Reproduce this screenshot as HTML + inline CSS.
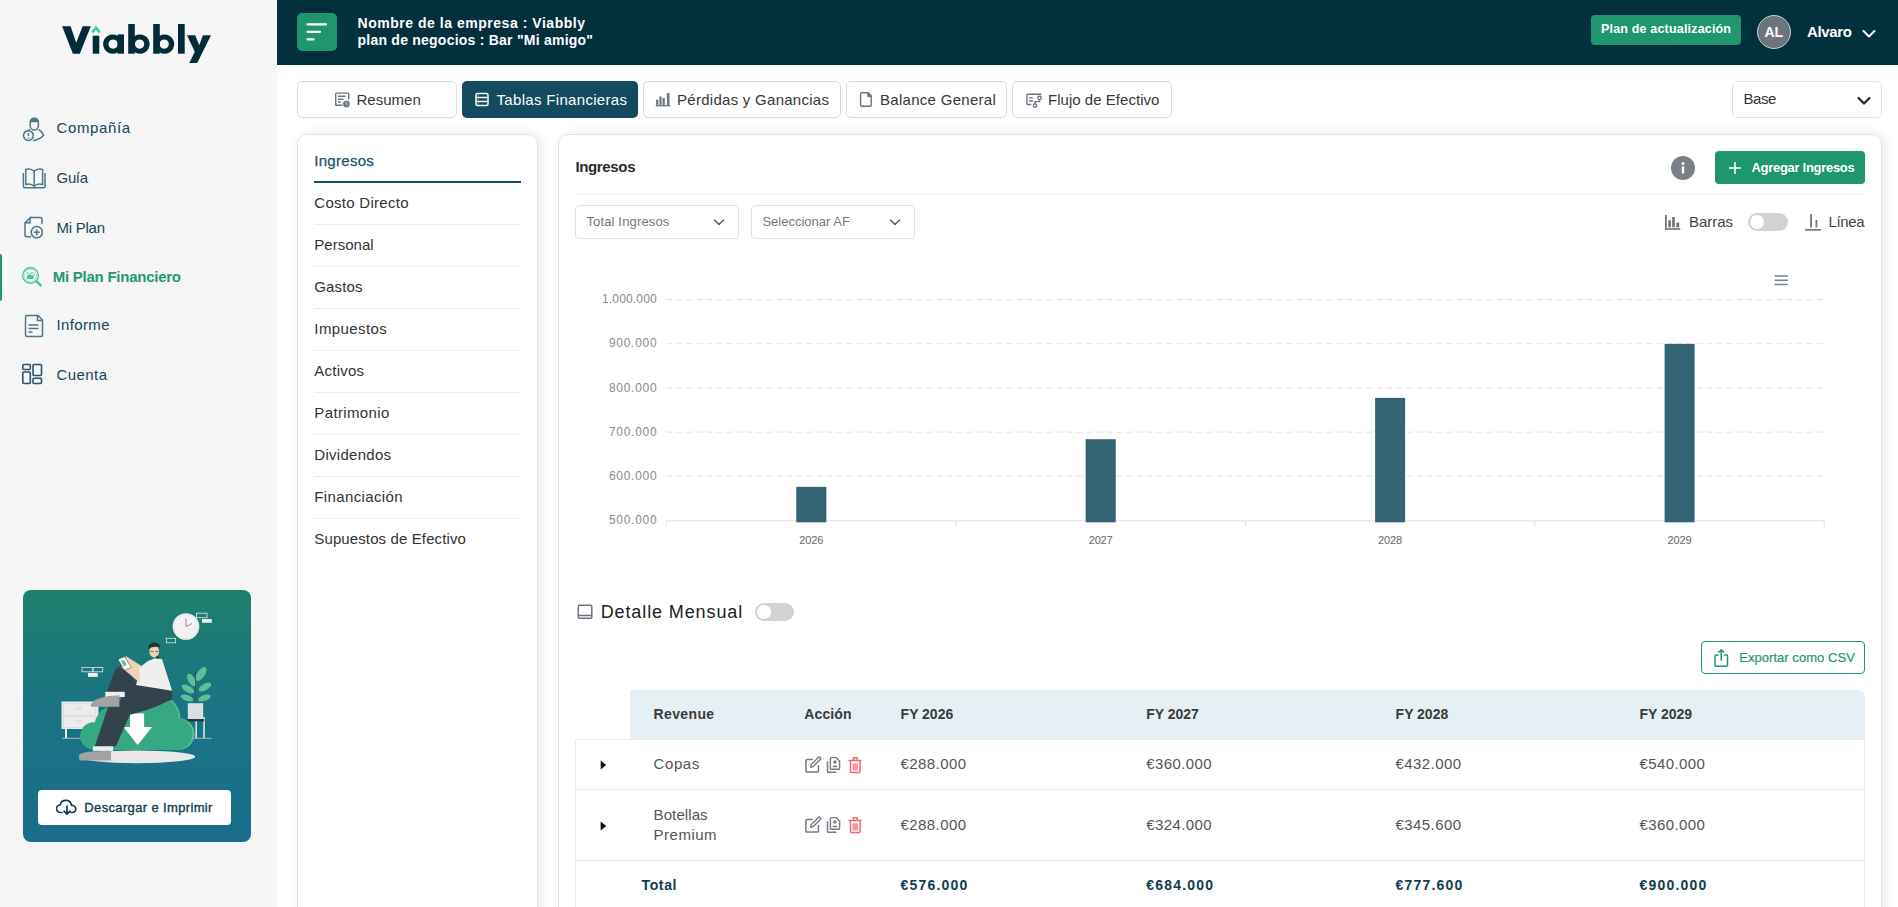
<!DOCTYPE html><html><head><meta charset="utf-8"><style>
html,body{margin:0;padding:0;}
body{width:1898px;height:907px;overflow:hidden;position:relative;background:#fff;font-family:"Liberation Sans",sans-serif;}
.t{position:absolute;white-space:nowrap;}
</style></head><body>
<div style="position:absolute;left:0;top:0;width:277px;height:907px;background:#f6f6f6"></div>
<svg style="position:absolute;left:0;top:0" width="277" height="80" viewBox="0 0 277 80">
<g fill="#032b3a">
<polygon points="62.1,26.2 70.6,26.2 76.2,42.8 82.6,26.2 90.8,26.2 79.8,53.7 72.9,53.7"/>
<rect x="92.7" y="35.7" width="6.6" height="18"/>
<path fill-rule="evenodd" d="M112.75,34.4 a9.65,9.65 0 1,0 0.01,0 Z M113.1,39.5 a4.6,4.6 0 1,0 0.01,0 Z"/>
<rect x="117.6" y="34.4" width="6.4" height="19.3"/>
<rect x="128.2" y="24" width="6.6" height="29.7"/>
<path fill-rule="evenodd" d="M139.95,34.4 a9.65,9.65 0 1,0 0.01,0 Z M139.6,39.5 a4.6,4.6 0 1,0 0.01,0 Z"/>
<rect x="153.2" y="24" width="6.6" height="29.7"/>
<path fill-rule="evenodd" d="M164.55,34.4 a9.65,9.65 0 1,0 0.01,0 Z M164.2,39.5 a4.6,4.6 0 1,0 0.01,0 Z"/>
<rect x="178" y="24" width="6.7" height="29.7"/>
<polygon points="187,35.2 195.2,35.2 199.2,45.2 203,35.2 211,35.2 197.2,62.9 189.3,62.9 194.8,51.8"/>
</g>
<polyline points="92.3,32.6 96,27.8 99.7,32.6" fill="none" stroke="#2fcf96" stroke-width="2.4" stroke-linejoin="miter"/>
</svg>
<svg style="position:absolute;left:0;top:100px" width="60" height="300" viewBox="0 100 60 300" fill="none" stroke="#4d7886" stroke-width="1.5">
<!-- Compania: person with ! -->
<path d="M30.2,122.5 a4.1,4.5 0 1,1 8.2,0 v3 a4.1,4.5 0 0,1 -8.2,0 Z"/>
<path d="M30.4,121.6 c0.6,-3.2 7.3,-3.2 7.8,0 Z" fill="#4d7886"/>
<path d="M30,129.5 c-1.5,0.6 -2.5,1.2 -3.2,1.8 M38.5,129.5 c2.2,1 4,3 5.2,5.8 c-3,3.2 -7.5,5 -10.5,5.3"/>
<circle cx="28.4" cy="135.6" r="4.9"/>
<path d="M28.4,133 v3 M28.4,137.6 v0.8"/>
<!-- Guia: book -->
<path d="M23.4,173 v13.5 a1.2,1.2 0 0,0 1.2,1.2 h19.2 a1.2,1.2 0 0,0 1.2,-1.2 v-13.5 M25.8,169.5 v15 c3,-1 6,-0.5 8.4,1.8 c2.4,-2.3 5.4,-2.8 8.4,-1.8 v-15 c-3,-1 -6,-0.5 -8.4,1.8 c-2.4,-2.3 -5.4,-2.8 -8.4,-1.8 Z M34.2,171.3 v15"/>
<!-- Mi Plan: doc with plus -->
<path d="M30,217.5 h10 a2,2 0 0,1 2,2 v4.5 M31,236.8 h-4 a2,2 0 0,1 -2,-2 v-12 l5,-5 v5 h-5"/>
<circle cx="36.8" cy="232.2" r="5.6"/>
<path d="M36.8,229.2 v6 M33.8,232.2 h6"/>
<!-- Informe: document -->
<path d="M27,315.5 h11 l4.5,4.5 v15 a1.5,1.5 0 0,1 -1.5,1.5 h-14 a1.5,1.5 0 0,1 -1.5,-1.5 v-18 a1.5,1.5 0 0,1 1.5,-1.5 Z M37.5,315.5 v5 h5 M28.5,325 h10 M28.5,328.5 h10 M28.5,332 h4"/>
<!-- Cuenta: grid -->
<g stroke="#2a5668" stroke-width="1.6">
<rect x="22.8" y="364.5" width="7.5" height="5" rx="1"/>
<rect x="22.8" y="372" width="7.5" height="11.5" rx="1"/>
<rect x="33" y="364.5" width="8.5" height="11" rx="1"/>
<rect x="33" y="378.3" width="8.5" height="5.2" rx="1"/>
</g>
</svg>
<svg style="position:absolute;left:18px;top:262px" width="28" height="28" viewBox="18 262 28 28" fill="none" stroke="#4cc59a" stroke-width="1.4">
<circle cx="30.5" cy="275.5" r="7.8"/>
<circle cx="30.5" cy="275.5" r="6" stroke-width="0.8" stroke-dasharray="1.2 1"/>
<path d="M36.2,281 l5.2,5.2" stroke-width="2.6"/>
<rect x="27" y="275" width="6.5" height="4" fill="#4cc59a" stroke="none"/>
<path d="M26.5,272 l3,2.5 l2.5,-2 l3,2.5" stroke-width="1"/>
</svg>
<div style="position:absolute;left:0;top:254.3px;width:2px;height:46.3px;background:#1f9670;border-radius:0 3px 3px 0"></div>
<div class="t" style="left:56.60px;top:120.10px;font-size:15px;line-height:15px;font-weight:400;color:#17465a;letter-spacing:0.599px;">Compañía</div>
<div class="t" style="left:56.60px;top:170.00px;font-size:15px;line-height:15px;font-weight:400;color:#17465a;letter-spacing:-0.373px;">Guía</div>
<div class="t" style="left:56.60px;top:219.80px;font-size:15px;line-height:15px;font-weight:400;color:#17465a;letter-spacing:-0.270px;">Mi Plan</div>
<div class="t" style="left:52.70px;top:268.80px;font-size:15px;line-height:15px;font-weight:700;color:#1f9a72;letter-spacing:-0.248px;">Mi Plan Financiero</div>
<div class="t" style="left:56.40px;top:317.00px;font-size:15px;line-height:15px;font-weight:400;color:#17465a;letter-spacing:0.391px;">Informe</div>
<div class="t" style="left:56.40px;top:366.80px;font-size:15px;line-height:15px;font-weight:400;color:#17465a;letter-spacing:0.446px;">Cuenta</div>
<div style="position:absolute;left:23px;top:590px;width:228px;height:252px;border-radius:8px;background:linear-gradient(180deg,#1d806d 0%,#1b7382 45%,#1a6d8c 100%)"></div>
<svg style="position:absolute;left:55px;top:605px" width="165" height="165" viewBox="0 0 165 165">
<g fill="none" stroke="#dfe8ea" stroke-width="0.8">
<rect x="141.5" y="8.2" width="10.5" height="4.5"/>
<rect x="111.3" y="33.3" width="9.3" height="4.5"/>
<rect x="27" y="62.4" width="10.3" height="4.4"/>
<rect x="38.2" y="62.4" width="9.5" height="4.4"/>
</g>
<g fill="#e9eef0">
<rect x="147" y="14" width="9.8" height="3.8"/>
<rect x="33" y="67.9" width="9.8" height="4"/>
</g>
<circle cx="131" cy="21.5" r="13.3" fill="#f2f2f2"/>
<circle cx="131" cy="21.5" r="12" fill="none" stroke="#dcdcdc" stroke-width="0.6"/>
<path d="M131,21.5 v-8 M131,21.5 l6,-3" stroke="#777" stroke-width="0.8"/>
<line x1="7" y1="133.3" x2="156.5" y2="133.3" stroke="#b9d3dd" stroke-width="0.8"/>
<!-- nightstand -->
<rect x="6.5" y="96.5" width="37" height="27.5" fill="#ececec"/>
<rect x="8.5" y="98.5" width="32" height="11.5" fill="none" stroke="#d6d6d6" stroke-width="0.6"/>
<rect x="8.5" y="111.5" width="32" height="11" fill="none" stroke="#d6d6d6" stroke-width="0.6"/>
<rect x="21" y="103" width="5" height="1.6" fill="none" stroke="#ccc" stroke-width="0.5"/>
<rect x="21" y="115.5" width="5" height="1.6" fill="none" stroke="#ccc" stroke-width="0.5"/>
<rect x="10" y="124" width="2" height="9" fill="#ececec"/>
<!-- plant -->
<rect x="140.3" y="112" width="1.7" height="21" fill="#cfdde2"/>
<rect x="148.2" y="112" width="1.7" height="21" fill="#cfdde2"/>
<g fill="#5cbf95">
<ellipse cx="146" cy="69" rx="3.8" ry="8" transform="rotate(35 146 69)"/>
<ellipse cx="136.5" cy="75" rx="3.3" ry="7" transform="rotate(-30 136.5 75)"/>
<ellipse cx="133" cy="84" rx="3.3" ry="7" transform="rotate(-60 133 84)"/>
<ellipse cx="150" cy="82" rx="3.3" ry="7" transform="rotate(60 150 82)"/>
<ellipse cx="132" cy="93" rx="3" ry="6.5" transform="rotate(-70 132 93)"/>
<ellipse cx="149.5" cy="93" rx="3" ry="6.5" transform="rotate(70 149.5 93)"/>
</g>
<path d="M140.5,98 v-31" stroke="#2f4a50" stroke-width="0.7"/>
<rect x="132.8" y="98.2" width="15.4" height="16" fill="#d9e0e4"/>
<rect x="131.9" y="114.1" width="17.2" height="2.2" fill="#263238"/>
<!-- shadow -->
<ellipse cx="82" cy="151.8" rx="58.2" ry="6.4" fill="#e8e8e8"/>
<!-- cloud -->
<g fill="#5cc49a">
<circle cx="99.8" cy="114.1" r="25.6"/>
<circle cx="123.6" cy="129.1" r="15.9"/>
</g>
<g fill="#37a982">
<circle cx="38.8" cy="130.9" r="13.7"/>
<circle cx="59.1" cy="120.3" r="19.4"/>
<circle cx="98.3" cy="114.1" r="25.6"/>
<circle cx="121.6" cy="129.1" r="15.9"/>
<rect x="38.8" y="118" width="84" height="27"/>
</g>
<!-- arrow -->
<rect x="75" y="108.4" width="14.1" height="14" fill="#fff"/>
<polygon points="68.4,122 97,122 82.7,140.1" fill="#fff"/>
<!-- lower leg -->
<path d="M57.3,98.2 C75,92 100,86 116.4,84.5 L117,93.8 C105,101 90,106 75,109.7 L60.9,141.5 L39.7,141.5 L52.9,102.6 Z" fill="#33434b"/>
<rect x="37.9" y="141.3" width="20.3" height="4.6" fill="#eeeeee"/>
<path d="M23.8,150.5 C25,147 35,146 56,145.9 L56,155.6 L24.5,155.6 Z" fill="#a2a2a2"/>
<!-- raised leg -->
<polygon points="52,86 61,63 68,60.4 81.8,78 117.1,85.7 117,95 90,100 64,98 69.7,89" fill="#33434b"/>
<rect x="50.3" y="86.8" width="19.4" height="5.2" fill="#eeeeee"/>
<path d="M35.7,100 C37,95 47,91 64.4,90.3 L64.4,101.8 L36,101.8 Z" fill="#a2a2a2"/>
<!-- shirt -->
<polygon points="93,56 100,53.2 107,54 117.1,85.7 81,80 84,70 85,62" fill="#efefef"/>
<!-- arm / hand -->
<polygon points="70.8,51 87.3,61.5 84,76.9 66.4,62.6" fill="#f2d2b6"/>
<path d="M84,64 L87.3,61.5 L92,68 L85,77" fill="#efefef"/>
<!-- phone -->
<polygon points="63,54.5 69.5,51.5 76.3,62.5 69.5,65.3" fill="#fff" stroke="#263238" stroke-width="0.5"/>
<polygon points="66,56 69,55 72,60 68.5,61" fill="#5cbf95"/>
<!-- head -->
<ellipse cx="99.2" cy="46.5" rx="4.8" ry="6" fill="#f2d2b6"/>
<path d="M93.2,44 C92.5,36.5 104.5,35 105.2,42.5 C102,41 97,41.5 93.2,44 Z" fill="#263238"/>
<path d="M95.5,46.5 h3 M100,46.5 h3" stroke="#263238" stroke-width="0.6"/>
<path d="M100,52.5 l3,-2 l0.8,3.5 Z" fill="#263238"/>
</svg>
<div style="position:absolute;left:38px;top:790px;width:193px;height:35px;background:#fff;border-radius:4px"></div>
<svg style="position:absolute;left:56px;top:799px" width="22" height="17" viewBox="0 0 22 17" fill="none" stroke="#0f3d4f" stroke-width="1.7" stroke-linecap="round" stroke-linejoin="round">
<path d="M6,13.5 h-1.5 a3.8,3.8 0 0,1 -0.3,-7.6 a5.8,5.8 0 0,1 11.4,0.6 a3.5,3.5 0 0,1 1.2,7 h-1.8"/>
<path d="M11,7 v8 M8,12.2 l3,3 l3,-3"/>
</svg>
<div class="t" style="left:84.30px;top:800.79px;font-size:13px;line-height:13px;font-weight:400;color:#0f3d4f;letter-spacing:0.355px;-webkit-text-stroke:0.35px #0f3d4f;">Descargar e Imprimir</div>
<div style="position:absolute;left:277px;top:0;width:1621px;height:65px;background:#03303d"></div>
<div style="position:absolute;left:297px;top:13px;width:40px;height:38px;background:#1f9670;border-radius:5px"></div>
<svg style="position:absolute;left:297px;top:13px" width="40" height="38" viewBox="0 0 40 38" stroke="#fff" stroke-width="2.3" stroke-linecap="round">
<path d="M10.5,11.3 h18.5 M10.5,18.8 h12.5 M10.5,26.3 h6"/>
</svg>
<div class="t" style="left:357.50px;top:15.75px;font-size:14px;line-height:14px;font-weight:700;color:#fff;letter-spacing:0.529px;">Nombre de la empresa : Viabbly</div>
<div class="t" style="left:357.50px;top:32.65px;font-size:14px;line-height:14px;font-weight:700;color:#fff;letter-spacing:0.235px;">plan de negocios : Bar "Mi amigo"</div>
<div style="position:absolute;left:1591px;top:15px;width:150px;height:30px;background:#1f9670;border-radius:4px"></div>
<div class="t" style="left:1601.00px;top:23.42px;font-size:12.5px;line-height:12.5px;font-weight:700;color:#fff;letter-spacing:0.179px;">Plan de actualización</div>
<div style="position:absolute;left:1757px;top:15px;width:32px;height:32px;background:#6c757d;border-radius:50%;border:1px solid #c7cdd1"></div>
<div class="t" style="left:1764.50px;top:24.65px;font-size:14px;line-height:14px;font-weight:700;color:#fff;letter-spacing:-0.162px;">AL</div>
<div class="t" style="left:1807.00px;top:24.30px;font-size:15px;line-height:15px;font-weight:700;color:#fff;letter-spacing:-0.337px;">Alvaro</div>
<svg style="position:absolute;left:1860px;top:27px" width="18" height="14" viewBox="0 0 18 14" fill="none" stroke="#fff" stroke-width="2" stroke-linecap="round" stroke-linejoin="round"><path d="M3.5,4 l5.5,5.5 l5.5,-5.5"/></svg>
<div style="position:absolute;left:297px;top:81px;width:158px;height:35px;border:1px solid #cfdfe5;border-radius:5px;background:#fff"></div>
<div style="position:absolute;left:462px;top:81px;width:176px;height:37px;background:#134a5e;border-radius:5px"></div>
<div style="position:absolute;left:643px;top:81px;width:196px;height:35px;border:1px solid #cfdfe5;border-radius:5px;background:#fff"></div>
<div style="position:absolute;left:846px;top:81px;width:159px;height:35px;border:1px solid #cfdfe5;border-radius:5px;background:#fff"></div>
<div style="position:absolute;left:1012px;top:81px;width:158px;height:35px;border:1px solid #cfdfe5;border-radius:5px;background:#fff"></div>
<svg style="position:absolute;left:330px;top:88px" width="24" height="24" viewBox="330 88 24 24" fill="none" stroke="#6c757d" stroke-width="1.4">
<path d="M342.5,105.3 h-6 a0.8,0.8 0 0,1 -0.8,-0.8 v-10.6 a0.8,0.8 0 0,1 0.8,-0.8 h11.4 a0.8,0.8 0 0,1 0.8,0.8 v5.5 M338,96.3 h7.5 M338,99.2 h5.5 M338,102 h2.8"/>
<circle cx="346.4" cy="104" r="3.9" fill="#6c757d" stroke="#fff" stroke-width="0.9"/>
<path d="M346.4,102.2 v2 l1.1,0.9" stroke="#fff" stroke-width="0.8"/>
</svg>
<svg style="position:absolute;left:470px;top:88px" width="24" height="24" viewBox="470 88 24 24" fill="none" stroke="#fff" stroke-width="1.5">
<rect x="476" y="93.6" width="12" height="12" rx="1.5"/>
<path d="M476,97.6 h12 M476,101.6 h12 M478.3,95.6 h0.4 M478.3,99.6 h0.4 M478.3,103.6 h0.4"/>
</svg>
<svg style="position:absolute;left:652px;top:88px" width="22" height="22" viewBox="652 88 22 22" fill="#6c757d">
<rect x="656.1" y="99.6" width="2.2" height="5.5"/><rect x="659.4" y="96.5" width="2.2" height="8.6"/><rect x="662.6" y="98" width="2.2" height="7.1"/><rect x="666.9" y="93.1" width="2.6" height="12"/>
<rect x="655.7" y="105.1" width="14.5" height="1.3"/>
</svg>
<svg style="position:absolute;left:856px;top:88px" width="20" height="22" viewBox="856 88 20 22" fill="none" stroke="#6c757d" stroke-width="1.4" stroke-linejoin="round">
<path d="M861.6,92.8 h6.4 l3.2,3.5 v9 a1,1 0 0,1 -1,1 h-8.6 a1,1 0 0,1 -1,-1 v-11.5 a1,1 0 0,1 1,-1 Z"/>
<polygon points="868,92.8 871.2,96.3 868,96.3" fill="#6c757d"/>
</svg>
<svg style="position:absolute;left:1023px;top:88px" width="22" height="22" viewBox="1023 88 22 22" fill="none" stroke="#6c757d" stroke-width="1.35" stroke-linecap="round">
<path d="M1040.9,94.2 h-13.2 a0.8,0.8 0 0,0 -0.8,0.8 v8.7 a0.8,0.8 0 0,0 0.8,0.8 h2.9 M1029.5,97.9 h3 M1029.5,101 h3"/>
<circle cx="1039.6" cy="97.9" r="1.7"/><circle cx="1035" cy="105.5" r="1.7"/>
<path d="M1039.6,99.6 v2 h-4.6 v2.2"/>
</svg>
<div class="t" style="left:356.40px;top:91.50px;font-size:15px;line-height:15px;font-weight:400;color:#383838;letter-spacing:0.034px;">Resumen</div>
<div class="t" style="left:496.50px;top:91.50px;font-size:15px;line-height:15px;font-weight:400;color:#fff;letter-spacing:0.320px;">Tablas Financieras</div>
<div class="t" style="left:677.00px;top:91.50px;font-size:15px;line-height:15px;font-weight:400;color:#383838;letter-spacing:0.276px;">Pérdidas y Ganancias</div>
<div class="t" style="left:880.00px;top:91.50px;font-size:15px;line-height:15px;font-weight:400;color:#383838;letter-spacing:0.290px;">Balance General</div>
<div class="t" style="left:1048.00px;top:91.50px;font-size:15px;line-height:15px;font-weight:400;color:#383838;letter-spacing:0.032px;">Flujo de Efectivo</div>
<div style="position:absolute;left:1732px;top:81px;width:148px;height:35px;border:1px solid #dee2e6;border-radius:5px;background:#fff"></div>
<div class="t" style="left:1743.40px;top:91.00px;font-size:15px;line-height:15px;font-weight:400;color:#333;letter-spacing:-0.396px;">Base</div>
<svg style="position:absolute;left:1855px;top:93.5px" width="18" height="14" viewBox="0 0 18 14" fill="none" stroke="#212529" stroke-width="2.2" stroke-linecap="round" stroke-linejoin="round"><path d="M3.5,4 l5.5,5.5 l5.5,-5.5"/></svg>
<div style="position:absolute;left:297px;top:134px;width:239px;height:800px;border:1px solid #d8e5ea;border-radius:10px;background:#fff;box-shadow:3px 0 14px rgba(0,0,0,0.085)"></div>
<div class="t" style="left:314.30px;top:153.30px;font-size:15px;line-height:15px;font-weight:400;color:#17536b;letter-spacing:0.281px;font-weight:400;-webkit-text-stroke:0.25px #17536b;">Ingresos</div>
<div style="position:absolute;left:314px;top:181px;width:207px;height:2px;background:#1a4e63"></div>
<div class="t" style="left:314.30px;top:195.00px;font-size:15px;line-height:15px;font-weight:400;color:#333;letter-spacing:0.278px;">Costo Directo</div>
<div style="position:absolute;left:314px;top:224px;width:207px;height:1px;background:#e8eef0"></div>
<div class="t" style="left:314.30px;top:237.00px;font-size:15px;line-height:15px;font-weight:400;color:#333;letter-spacing:0.028px;">Personal</div>
<div style="position:absolute;left:314px;top:266px;width:207px;height:1px;background:#e8eef0"></div>
<div class="t" style="left:314.30px;top:279.00px;font-size:15px;line-height:15px;font-weight:400;color:#333;letter-spacing:0.156px;">Gastos</div>
<div style="position:absolute;left:314px;top:308px;width:207px;height:1px;background:#e8eef0"></div>
<div class="t" style="left:314.30px;top:321.00px;font-size:15px;line-height:15px;font-weight:400;color:#333;letter-spacing:0.413px;">Impuestos</div>
<div style="position:absolute;left:314px;top:350px;width:207px;height:1px;background:#e8eef0"></div>
<div class="t" style="left:314.30px;top:363.00px;font-size:15px;line-height:15px;font-weight:400;color:#333;letter-spacing:0.226px;">Activos</div>
<div style="position:absolute;left:314px;top:392px;width:207px;height:1px;background:#e8eef0"></div>
<div class="t" style="left:314.30px;top:405.00px;font-size:15px;line-height:15px;font-weight:400;color:#333;letter-spacing:0.367px;">Patrimonio</div>
<div style="position:absolute;left:314px;top:434px;width:207px;height:1px;background:#e8eef0"></div>
<div class="t" style="left:314.30px;top:447.00px;font-size:15px;line-height:15px;font-weight:400;color:#333;letter-spacing:0.277px;">Dividendos</div>
<div style="position:absolute;left:314px;top:476px;width:207px;height:1px;background:#e8eef0"></div>
<div class="t" style="left:314.30px;top:489.00px;font-size:15px;line-height:15px;font-weight:400;color:#333;letter-spacing:0.371px;">Financiación</div>
<div style="position:absolute;left:314px;top:518px;width:207px;height:1px;background:#e8eef0"></div>
<div class="t" style="left:314.30px;top:531.00px;font-size:15px;line-height:15px;font-weight:400;color:#333;letter-spacing:0.117px;">Supuestos de Efectivo</div>
<div style="position:absolute;left:558px;top:134px;width:1322px;height:800px;border:1px solid #d8e5ea;border-radius:10px;background:#fff;box-shadow:3px 0 14px rgba(0,0,0,0.085)"></div>
<div class="t" style="left:575.40px;top:158.80px;font-size:15px;line-height:15px;font-weight:700;color:#2b2b2b;letter-spacing:-0.346px;">Ingresos</div>
<div style="position:absolute;left:1671px;top:156px;width:24px;height:24px;border-radius:50%;background:#7b8087"></div>
<svg style="position:absolute;left:1671px;top:156px" width="24" height="24" viewBox="0 0 24 24" fill="#fff"><circle cx="12" cy="7.6" r="1.5"/><rect x="10.8" y="10.3" width="2.4" height="7.2"/></svg>
<div style="position:absolute;left:1715px;top:151px;width:150px;height:33px;background:#1f9670;border-radius:4px"></div>
<svg style="position:absolute;left:1727px;top:160px" width="16" height="16" viewBox="0 0 16 16" stroke="#fff" stroke-width="1.5"><path d="M8,2 v12 M2,8 h12"/></svg>
<div class="t" style="left:1751.50px;top:160.89px;font-size:13px;line-height:13px;font-weight:700;color:#fff;letter-spacing:-0.296px;">Agregar Ingresos</div>
<div style="position:absolute;left:575px;top:194px;width:1290px;height:1px;background:#e5eef0"></div>
<div style="position:absolute;left:575px;top:205px;width:162px;height:31.5px;border:1px solid #dee2e6;border-radius:4px;background:#fff"></div>
<div class="t" style="left:586.40px;top:214.99px;font-size:13px;line-height:13px;font-weight:400;color:#777;letter-spacing:0.152px;">Total Ingresos</div>
<svg style="position:absolute;left:712px;top:216px" width="14" height="12" viewBox="0 0 14 12" fill="none" stroke="#555" stroke-width="1.4" stroke-linecap="round" stroke-linejoin="round"><path d="M2.5,4 l4.5,4.5 l4.5,-4.5"/></svg>
<div style="position:absolute;left:751px;top:205px;width:162px;height:31.5px;border:1px solid #dee2e6;border-radius:4px;background:#fff"></div>
<div class="t" style="left:762.40px;top:214.99px;font-size:13px;line-height:13px;font-weight:400;color:#777;letter-spacing:0.005px;">Seleccionar AF</div>
<svg style="position:absolute;left:888px;top:216px" width="14" height="12" viewBox="0 0 14 12" fill="none" stroke="#555" stroke-width="1.4" stroke-linecap="round" stroke-linejoin="round"><path d="M2.5,4 l4.5,4.5 l4.5,-4.5"/></svg>
<svg style="position:absolute;left:1663px;top:212px" width="20" height="20" viewBox="1663 212 20 20" fill="#6c757d">
<rect x="1665" y="214.8" width="1.7" height="15"/><rect x="1665" y="228.2" width="15.3" height="1.6"/>
<rect x="1668.3" y="220.3" width="2.6" height="7"/><rect x="1672.2" y="217" width="2.6" height="10.3"/><rect x="1676.4" y="222.6" width="2.8" height="4.7"/>
</svg>
<div class="t" style="left:1689.00px;top:213.80px;font-size:15px;line-height:15px;font-weight:400;color:#444;letter-spacing:-0.036px;">Barras</div>
<div style="position:absolute;left:1748px;top:213px;width:39.5px;height:17.5px;border-radius:9px;background:#d2d2d2"></div>
<div style="position:absolute;left:1749.5px;top:214.5px;width:14.5px;height:14.5px;border-radius:50%;background:#fff"></div>
<svg style="position:absolute;left:1803px;top:212px" width="20" height="20" viewBox="1803 212 20 20" fill="#6c757d">
<rect x="1805" y="229" width="16" height="1.6"/><rect x="1810.2" y="214" width="1.8" height="13.5"/><rect x="1815.5" y="220" width="1.8" height="7.5"/>
</svg>
<div class="t" style="left:1828.50px;top:213.80px;font-size:15px;line-height:15px;font-weight:400;color:#444;letter-spacing:-0.359px;">Línea</div>
<svg style="position:absolute;left:0;top:0;pointer-events:none" width="1898" height="907"><line x1="666.6" y1="299.7" x2="1824" y2="299.7" stroke="#e0e0e0" stroke-width="1" stroke-dasharray="6 4"/><line x1="666.6" y1="343.8" x2="1824" y2="343.8" stroke="#e0e0e0" stroke-width="1" stroke-dasharray="6 4"/><line x1="666.6" y1="388.0" x2="1824" y2="388.0" stroke="#e0e0e0" stroke-width="1" stroke-dasharray="6 4"/><line x1="666.6" y1="432.1" x2="1824" y2="432.1" stroke="#e0e0e0" stroke-width="1" stroke-dasharray="6 4"/><line x1="666.6" y1="476.2" x2="1824" y2="476.2" stroke="#e0e0e0" stroke-width="1" stroke-dasharray="6 4"/><line x1="666.6" y1="520.8" x2="1824.5" y2="520.8" stroke="#e0e0e0" stroke-width="1"/><line x1="666.6" y1="520.8" x2="666.6" y2="526.5" stroke="#e0e0e0" stroke-width="1"/><line x1="956" y1="520.8" x2="956" y2="526.5" stroke="#e0e0e0" stroke-width="1"/><line x1="1245.4" y1="520.8" x2="1245.4" y2="526.5" stroke="#e0e0e0" stroke-width="1"/><line x1="1534.8" y1="520.8" x2="1534.8" y2="526.5" stroke="#e0e0e0" stroke-width="1"/><line x1="1824.2" y1="520.8" x2="1824.2" y2="526.5" stroke="#e0e0e0" stroke-width="1"/><rect x="796.3" y="486.8" width="30" height="35.5" fill="#346474"/><rect x="1085.7" y="439.2" width="30" height="83.1" fill="#346474"/><rect x="1375.1" y="397.9" width="30" height="124.4" fill="#346474"/><rect x="1664.6" y="343.9" width="30" height="178.4" fill="#346474"/><path d="M1774.6,276 h13.2 M1774.6,280.2 h13.2 M1774.6,284.4 h13.2" stroke="#6e8192" stroke-width="1.5"/></svg>
<div class="t" style="left:602.00px;top:293.34px;font-size:12px;line-height:12px;font-weight:400;color:#8a8a8a;letter-spacing:0.164px;">1.000.000</div>
<div class="t" style="left:608.90px;top:337.46px;font-size:12px;line-height:12px;font-weight:400;color:#8a8a8a;letter-spacing:0.737px;">900.000</div>
<div class="t" style="left:608.90px;top:381.58px;font-size:12px;line-height:12px;font-weight:400;color:#8a8a8a;letter-spacing:0.737px;">800.000</div>
<div class="t" style="left:608.90px;top:425.70px;font-size:12px;line-height:12px;font-weight:400;color:#8a8a8a;letter-spacing:0.737px;">700.000</div>
<div class="t" style="left:608.90px;top:469.82px;font-size:12px;line-height:12px;font-weight:400;color:#8a8a8a;letter-spacing:0.737px;">600.000</div>
<div class="t" style="left:608.90px;top:513.94px;font-size:12px;line-height:12px;font-weight:400;color:#8a8a8a;letter-spacing:0.737px;">500.000</div>
<div class="t" style="left:799.30px;top:534.59px;font-size:11px;line-height:11px;font-weight:400;color:#666;letter-spacing:-0.157px;">2026</div>
<div class="t" style="left:1088.70px;top:534.59px;font-size:11px;line-height:11px;font-weight:400;color:#666;letter-spacing:-0.157px;">2027</div>
<div class="t" style="left:1378.10px;top:534.59px;font-size:11px;line-height:11px;font-weight:400;color:#666;letter-spacing:-0.157px;">2028</div>
<div class="t" style="left:1667.60px;top:534.59px;font-size:11px;line-height:11px;font-weight:400;color:#666;letter-spacing:-0.157px;">2029</div>
<svg style="position:absolute;left:575px;top:602px" width="20" height="20" viewBox="575 602 20 20" fill="none" stroke="#6c757d" stroke-width="1.5">
<rect x="578.3" y="605.2" width="13.5" height="13" rx="1.2"/><path d="M578.3,615.5 h13.5"/>
</svg>
<div class="t" style="left:600.70px;top:602.66px;font-size:18px;line-height:18px;font-weight:400;color:#222;letter-spacing:0.888px;">Detalle Mensual</div>
<div style="position:absolute;left:755.3px;top:603.2px;width:39.2px;height:17.7px;border-radius:9px;background:#d2d2d2"></div>
<div style="position:absolute;left:756.8px;top:604.7px;width:14.7px;height:14.7px;border-radius:50%;background:#fff"></div>
<div style="position:absolute;left:1701px;top:641px;width:161.5px;height:30.5px;border:1.2px solid #1f9670;border-radius:4px;background:#fff"></div>
<svg style="position:absolute;left:1711px;top:646px" width="22" height="24" viewBox="1711 646 22 24" fill="none" stroke="#1f9670" stroke-width="1.5" stroke-linecap="round" stroke-linejoin="round">
<path d="M1718,655 h-2 a1,1 0 0,0 -1,1 v9.3 a1,1 0 0,0 1,1 h10.5 a1,1 0 0,0 1,-1 v-9.3 a1,1 0 0,0 -1,-1 h-2 M1721.2,660.3 v-10.5 M1718.6,652.3 l2.6,-2.6 l2.6,2.6"/>
</svg>
<div class="t" style="left:1739.20px;top:650.99px;font-size:13px;line-height:13px;font-weight:400;color:#1f9670;letter-spacing:0.046px;-webkit-text-stroke:0.2px #1f9670;">Exportar como CSV</div>
<div style="position:absolute;left:630px;top:690px;width:1235px;height:49.5px;background:#e5f0f5;border-radius:0 6px 0 0"></div>
<div style="position:absolute;left:575px;top:739px;width:1288px;height:180px;border:1px solid #ebebeb"></div>
<div style="position:absolute;left:575.5px;top:789px;width:1288.5px;height:1px;background:#e8e8e8"></div>
<div style="position:absolute;left:575.5px;top:860px;width:1288.5px;height:1px;background:#e8e8e8"></div>
<div class="t" style="left:653.60px;top:706.75px;font-size:14px;line-height:14px;font-weight:700;color:#3a3a3a;letter-spacing:0.357px;">Revenue</div>
<div class="t" style="left:804.30px;top:706.75px;font-size:14px;line-height:14px;font-weight:700;color:#3a3a3a;letter-spacing:0.105px;">Acción</div>
<div class="t" style="left:900.60px;top:706.75px;font-size:14px;line-height:14px;font-weight:700;color:#3a3a3a;letter-spacing:-0.012px;">FY 2026</div>
<div class="t" style="left:1146.30px;top:706.75px;font-size:14px;line-height:14px;font-weight:700;color:#3a3a3a;letter-spacing:-0.012px;">FY 2027</div>
<div class="t" style="left:1395.60px;top:706.75px;font-size:14px;line-height:14px;font-weight:700;color:#3a3a3a;letter-spacing:-0.012px;">FY 2028</div>
<div class="t" style="left:1639.50px;top:706.75px;font-size:14px;line-height:14px;font-weight:700;color:#3a3a3a;letter-spacing:-0.012px;">FY 2029</div>
<div class="t" style="left:653.60px;top:756.30px;font-size:15px;line-height:15px;font-weight:400;color:#555;letter-spacing:0.585px;">Copas</div>
<div class="t" style="left:653.60px;top:806.60px;font-size:15px;line-height:15px;font-weight:400;color:#555;letter-spacing:0.091px;">Botellas</div>
<div class="t" style="left:653.60px;top:827.10px;font-size:15px;line-height:15px;font-weight:400;color:#555;letter-spacing:0.499px;">Premium</div>
<svg style="position:absolute;left:598px;top:757.2px" width="12" height="16" viewBox="0 0 12 16"><polygon points="2.7,3.4 8.2,8 2.7,12.6" fill="#111"/></svg>
<svg style="position:absolute;left:800px;top:750.00px" width="68" height="30" viewBox="800 750 68 30" fill="none" stroke-linecap="round" stroke-linejoin="round">
<path d="M812.3,759.6 h-5.2 a1.2,1.2 0 0,0 -1.2,1.2 v10.1 a1.2,1.2 0 0,0 1.2,1.2 h10.2 a1.2,1.2 0 0,0 1.2,-1.2 v-5.2" stroke="#757b83" stroke-width="1.5"/>
<path d="M810.6,767.4 l0.5,-2.6 l7.3,-7.3 a1.3,1.3 0 0,1 1.9,1.9 l-7.3,7.3 Z" stroke="#757b83" stroke-width="1.4"/>
<path d="M827.5,761.8 v9.6 a0.8,0.8 0 0,0 0.8,0.8 h7.5" stroke="#757b83" stroke-width="1.5"/>
<path d="M831.2,757.6 h5 l3.4,3.6 v7.3 a0.8,0.8 0 0,1 -0.8,0.8 h-7.6 a0.8,0.8 0 0,1 -0.8,-0.8 v-10.1 a0.8,0.8 0 0,1 0.8,-0.8 Z" stroke="#757b83" stroke-width="1.4"/>
<path d="M834.9,760.6 v2.8 M833.5,762 h2.8 M833.3,766.5 h3.3" stroke="#757b83" stroke-width="1.3"/>
<path d="M849,760.4 h12 M853.4,760.2 v-2.4 h3.8 v2.4 M850.5,761.5 v10.1 a0.9,0.9 0 0,0 0.9,0.9 h7.8 a0.9,0.9 0 0,0 0.9,-0.9 v-10.1" stroke="#ef6b6b" stroke-width="1.5"/>
<rect x="852.4" y="763.5" width="5.8" height="6.8" fill="#f6a9a9" stroke="none"/>
<path d="M853.5,763.5 v6.8 M855.3,763.5 v6.8 M857.1,763.5 v6.8" stroke="#ef7a7a" stroke-width="0.6"/>
</svg>
<svg style="position:absolute;left:598px;top:817.5px" width="12" height="16" viewBox="0 0 12 16"><polygon points="2.7,3.4 8.2,8 2.7,12.6" fill="#111"/></svg>
<svg style="position:absolute;left:800px;top:810.30px" width="68" height="30" viewBox="800 750 68 30" fill="none" stroke-linecap="round" stroke-linejoin="round">
<path d="M812.3,759.6 h-5.2 a1.2,1.2 0 0,0 -1.2,1.2 v10.1 a1.2,1.2 0 0,0 1.2,1.2 h10.2 a1.2,1.2 0 0,0 1.2,-1.2 v-5.2" stroke="#757b83" stroke-width="1.5"/>
<path d="M810.6,767.4 l0.5,-2.6 l7.3,-7.3 a1.3,1.3 0 0,1 1.9,1.9 l-7.3,7.3 Z" stroke="#757b83" stroke-width="1.4"/>
<path d="M827.5,761.8 v9.6 a0.8,0.8 0 0,0 0.8,0.8 h7.5" stroke="#757b83" stroke-width="1.5"/>
<path d="M831.2,757.6 h5 l3.4,3.6 v7.3 a0.8,0.8 0 0,1 -0.8,0.8 h-7.6 a0.8,0.8 0 0,1 -0.8,-0.8 v-10.1 a0.8,0.8 0 0,1 0.8,-0.8 Z" stroke="#757b83" stroke-width="1.4"/>
<path d="M834.9,760.6 v2.8 M833.5,762 h2.8 M833.3,766.5 h3.3" stroke="#757b83" stroke-width="1.3"/>
<path d="M849,760.4 h12 M853.4,760.2 v-2.4 h3.8 v2.4 M850.5,761.5 v10.1 a0.9,0.9 0 0,0 0.9,0.9 h7.8 a0.9,0.9 0 0,0 0.9,-0.9 v-10.1" stroke="#ef6b6b" stroke-width="1.5"/>
<rect x="852.4" y="763.5" width="5.8" height="6.8" fill="#f6a9a9" stroke="none"/>
<path d="M853.5,763.5 v6.8 M855.3,763.5 v6.8 M857.1,763.5 v6.8" stroke="#ef7a7a" stroke-width="0.6"/>
</svg>
<div class="t" style="left:900.60px;top:756.30px;font-size:15px;line-height:15px;font-weight:400;color:#555;letter-spacing:0.405px;">€288.000</div>
<div class="t" style="left:1146.30px;top:756.30px;font-size:15px;line-height:15px;font-weight:400;color:#555;letter-spacing:0.405px;">€360.000</div>
<div class="t" style="left:1395.60px;top:756.30px;font-size:15px;line-height:15px;font-weight:400;color:#555;letter-spacing:0.405px;">€432.000</div>
<div class="t" style="left:1639.50px;top:756.30px;font-size:15px;line-height:15px;font-weight:400;color:#555;letter-spacing:0.405px;">€540.000</div>
<div class="t" style="left:900.60px;top:817.00px;font-size:15px;line-height:15px;font-weight:400;color:#555;letter-spacing:0.405px;">€288.000</div>
<div class="t" style="left:1146.30px;top:817.00px;font-size:15px;line-height:15px;font-weight:400;color:#555;letter-spacing:0.405px;">€324.000</div>
<div class="t" style="left:1395.60px;top:817.00px;font-size:15px;line-height:15px;font-weight:400;color:#555;letter-spacing:0.405px;">€345.600</div>
<div class="t" style="left:1639.50px;top:817.00px;font-size:15px;line-height:15px;font-weight:400;color:#555;letter-spacing:0.405px;">€360.000</div>
<div class="t" style="left:641.50px;top:877.85px;font-size:14px;line-height:14px;font-weight:700;color:#0f3d4f;letter-spacing:0.649px;">Total</div>
<div class="t" style="left:900.60px;top:877.85px;font-size:14px;line-height:14px;font-weight:700;color:#0f3d4f;letter-spacing:1.187px;">€576.000</div>
<div class="t" style="left:1146.30px;top:877.85px;font-size:14px;line-height:14px;font-weight:700;color:#0f3d4f;letter-spacing:1.187px;">€684.000</div>
<div class="t" style="left:1395.60px;top:877.85px;font-size:14px;line-height:14px;font-weight:700;color:#0f3d4f;letter-spacing:1.187px;">€777.600</div>
<div class="t" style="left:1639.50px;top:877.85px;font-size:14px;line-height:14px;font-weight:700;color:#0f3d4f;letter-spacing:1.187px;">€900.000</div>
</body></html>
